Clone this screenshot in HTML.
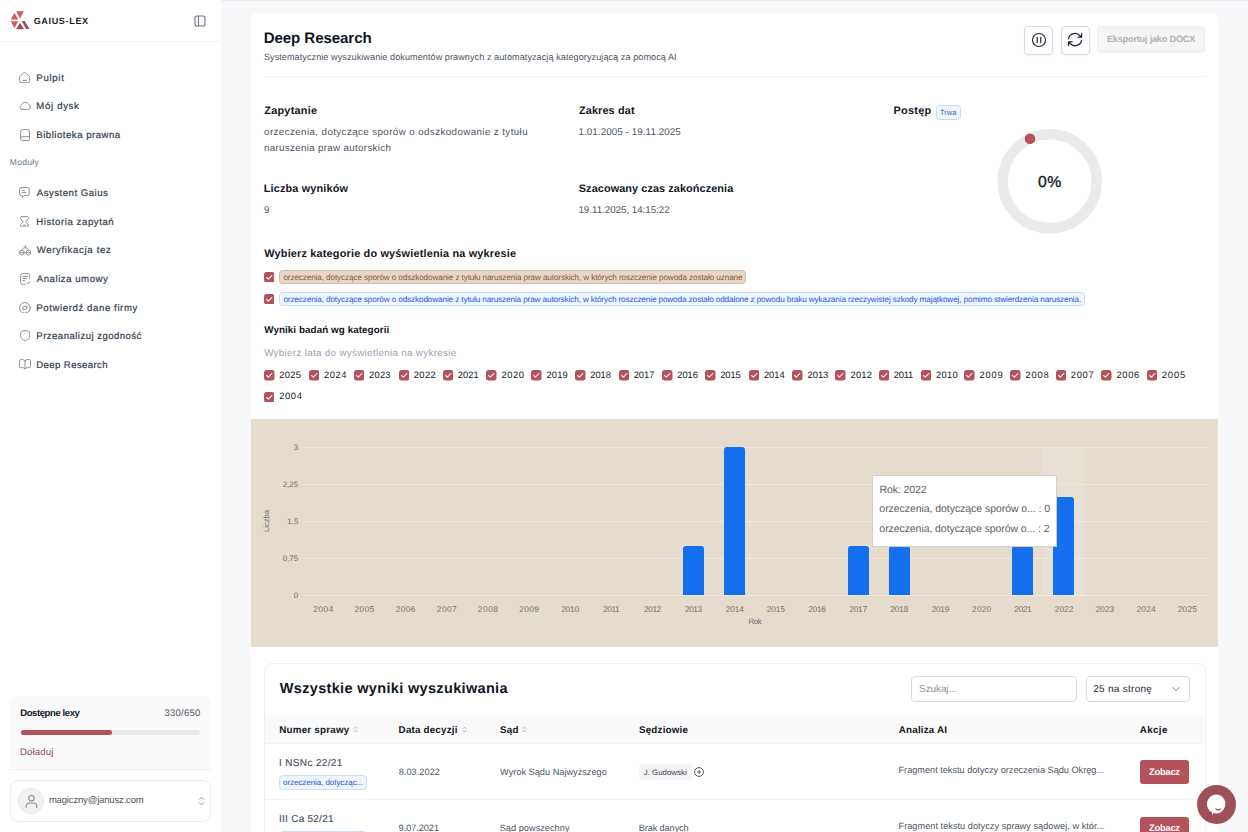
<!DOCTYPE html>
<html lang="pl"><head><meta charset="utf-8"><title>Deep Research - Gaius-Lex</title>
<style>
html,body{margin:0;padding:0;}
body{width:1248px;height:832px;overflow:hidden;position:relative;background:#f7f8fa;font-family:"Liberation Sans", sans-serif;text-rendering:geometricPrecision;}
.b{position:absolute;box-sizing:border-box;}
.t{position:absolute;white-space:nowrap;margin:0;padding:0;}
</style></head><body>
<div class="b" style="left:221px;top:0px;width:1027px;height:1px;background:#e9ebee;"></div>
<div class="b" style="left:0px;top:0px;width:221px;height:832px;background:#ffffff;"></div>
<div class="b" style="left:0px;top:41px;width:221px;height:1px;background:#f1f2f4;"></div>
<div class="b" style="left:250.5px;top:12.5px;width:967px;height:830px;background:#ffffff;border-radius:7px;"></div>
<svg class="b" style="left:8px;top:8px;" width="24" height="24" viewBox="0 0 24 24" fill="none"><polygon points="8.1,3.3 16,3.3 12,10.4" fill="#cd5b65"/><polygon points="6.4,4.7 2.8,11.6 10.2,11.6" fill="#cd5b65"/><polygon points="2.8,13.3 10.2,13.3 6.4,20.2" fill="#cd5b65"/><polygon points="12,14.7 8.1,21.2 16,21.2" fill="#a04a53"/><polygon points="13.7,13.1 16.8,13.1 21.4,21 18.1,21" fill="#a04a53"/></svg>
<svg class="b" style="left:194px;top:14.5px;" width="12" height="12" viewBox="0 0 12 12" fill="none"><rect x="1" y="1" width="10" height="10" rx="2" stroke="#6b7280" stroke-width="1.1"/><path d="M4.5 1v10" stroke="#6b7280" stroke-width="1.1"/></svg>
<svg class="b" style="left:18.75px;top:71.5px;" width="11.25" height="11.4" viewBox="0 0 11.25 11.4" fill="none"><g stroke="#8b909a" stroke-width="1" stroke-linecap="round" stroke-linejoin="round"><path d="M.6 5.3a1.600 1.600 0 0 1 .6-1.250L4.600 1a1.600 1.600 0 0 1 2.050 0l3.400 3.050a1.600 1.600 0 0 1 .6 1.250V8.800a2 2 0 0 1-2 2H2.600a2 2 0 0 1-2-2z"/><path d="M4.300 8.300h2.700" stroke-width="1.300"/></g></svg>
<svg class="b" style="left:18.75px;top:101.25px;" width="12.0" height="9.0" viewBox="0 0 12.0 9.0" fill="none"><g stroke="#8b909a" stroke-width="1" stroke-linecap="round" stroke-linejoin="round"><path d="M3.200 8.400h5.700a2.550 2.550 0 0 0 .7-5A3.900 3.900 0 0 0 2.300 4.300a2.150 2.150 0 0 0 .9 4.100z"/></g></svg>
<svg class="b" style="left:20px;top:128.5px;" width="10" height="12.1" viewBox="0 0 10 12.1" fill="none"><g stroke="#8b909a" stroke-width="1" stroke-linecap="round" stroke-linejoin="round"><path d="M.6 9.600V2.400A1.800 1.800 0 0 1 2.400 .6h6a1 1 0 0 1 1 1v8.900a1 1 0 0 1-1 1H2.500a1.900 1.900 0 0 1 0-3.800h6.900"/></g></svg>
<svg class="b" style="left:19.1px;top:187.3px;" width="10.8" height="11.4" viewBox="0 0 10.8 11.4" fill="none"><g stroke="#8b909a" stroke-width="1" stroke-linecap="round" stroke-linejoin="round"><path d="M2.400 .6h6a1.800 1.800 0 0 1 1.800 1.800v4.400a1.800 1.800 0 0 1-1.800 1.800H5.300L3.200 10.700V8.600H2.400A1.800 1.800 0 0 1 .6 6.800V2.400A1.800 1.800 0 0 1 2.400 .6z"/><path d="M3 3.400h2.300M3 5.400h4"/></g></svg>
<svg class="b" style="left:20.1px;top:215.9px;" width="8.9" height="11.6" viewBox="0 0 8.9 11.6" fill="none"><g stroke="#8b909a" stroke-width="1" stroke-linecap="round" stroke-linejoin="round"><path d="M1.600 .6h5.700a1 1 0 0 1 1 1v.9c0 1.700-2.500 2.100-2.500 3.300s2.500 1.600 2.500 3.300v.9a1 1 0 0 1-1 1H1.600a1 1 0 0 1-1-1v-.9c0-1.700 2.500-2.100 2.500-3.300S.6 4.200 .6 2.500v-.9a1 1 0 0 1 1-1z"/><path d="M3.300 9.300h2.300"/></g></svg>
<svg class="b" style="left:18.6px;top:245.2px;" width="12.3" height="10.6" viewBox="0 0 12.3 10.6" fill="none"><g stroke="#8b909a" stroke-width="1" stroke-linecap="round" stroke-linejoin="round"><path d="M6.250 .5v2.300M2.800 4.900C3 3.500 4.500 2.800 6.250 2.800S9.500 3.500 9.700 4.900"/><circle cx="2.950" cy="7.600" r="2.400"/><circle cx="9.450" cy="7.600" r="2.400"/><path d="M.55 7.600h4.800M7.050 7.600h4.800"/></g></svg>
<svg class="b" style="left:19.5px;top:273px;" width="10.4" height="11.9" viewBox="0 0 10.4 11.9" fill="none"><g stroke="#8b909a" stroke-width="1" stroke-linecap="round" stroke-linejoin="round"><path d="M9.800 6.200V2.400A1.800 1.800 0 0 0 8 .6H2.400A1.800 1.800 0 0 0 .6 2.400v7.100a1.800 1.800 0 0 0 1.800 1.800H5.500"/><path d="M2.700 3.400h4.800M2.700 5.500h3.600M2.700 7.600h1.800"/><path d="M7 9.700l1.100 1.100 1.900-2.300"/></g></svg>
<svg class="b" style="left:18.8px;top:301.5px;" width="11.8" height="11.8" viewBox="0 0 11.8 11.8" fill="none"><g stroke="#8b909a" stroke-width="1" stroke-linecap="round" stroke-linejoin="round"><circle cx="5.900" cy="5.900" r="5.350"/><ellipse cx="5.900" cy="5.900" rx="2.500" ry="1.450" transform="rotate(-32 5.900 5.900)"/></g></svg>
<svg class="b" style="left:19.5px;top:330.2px;" width="10.4" height="11.2" viewBox="0 0 10.4 11.2" fill="none"><g stroke="#8b909a" stroke-width="1" stroke-linecap="round" stroke-linejoin="round"><path d="M.6 3.300A2.400 2.400 0 0 1 2.700 .9l2.500-.3 2.500.3a2.400 2.400 0 0 1 2.100 2.400v2.500c0 2.300-1.700 4-4.600 4.800C2.300 9.800 .6 8.100 .6 5.800z"/></g></svg>
<svg class="b" style="left:18.8px;top:359.1px;" width="12.1" height="10.5" viewBox="0 0 12.1 10.5" fill="none"><g stroke="#8b909a" stroke-width="1" stroke-linecap="round" stroke-linejoin="round"><path d="M6.050 2v8M6.050 2C5.600 1.100 4.700 .6 3.400 .6H1.600a1 1 0 0 0-1 1v6a1 1 0 0 0 1 1h1.800c1.300 0 2.200.5 2.650 1.400.45-.9 1.350-1.400 2.650-1.400h1.800a1 1 0 0 0 1-1v-6a1 1 0 0 0-1-1H8.700C7.400 .6 6.500 1.100 6.050 2z"/></g></svg>
<div class="b" style="left:10px;top:696px;width:201px;height:72.6px;background:#fafafa;border-radius:8px;"></div>
<div class="b" style="left:10px;top:769px;width:201px;height:1px;background:#f0f1f3;"></div>
<div class="b" style="left:20.8px;top:729.5px;width:179.5px;height:5px;background:#e9eaec;border-radius:2.5px;"></div>
<div class="b" style="left:20.8px;top:729.5px;width:91.5px;height:5px;background:#b4525c;border-radius:2.5px;"></div>
<div class="b" style="left:10px;top:780px;width:201px;height:42px;background:#ffffff;border:1px solid #ececee;border-radius:8px;"></div>
<div class="b" style="left:18px;top:788px;width:26px;height:26px;background:#f1f1f2;border:1px solid #e6e6e8;border-radius:13px;"></div>
<svg class="b" style="left:24.5px;top:793.5px;" width="13" height="15" viewBox="0 0 13 15" fill="none"><g stroke="#8b8f97" stroke-width="1.1" stroke-linecap="round"><circle cx="6.500" cy="4.200" r="2.700"/><path d="M1.200 13.500v-1.300A3.200 3.200 0 0 1 4.400 9h4.200a3.200 3.200 0 0 1 3.200 3.200v1.300"/></g></svg>
<svg class="b" style="left:197.5px;top:795.5px;" width="7" height="10" viewBox="0 0 7 10" fill="none"><g stroke="#8b8f97" stroke-width="0.9" stroke-linecap="round" stroke-linejoin="round"><path d="M1.300 3.400L3.500 1.200l2.200 2.200M1.300 6.600l2.200 2.200 2.200-2.200"/></g></svg>
<div class="b" style="left:264px;top:76px;width:941.5px;height:1px;background:#f2f3f5;"></div>
<div class="b" style="left:1024px;top:26px;width:28.8px;height:28.5px;background:#ffffff;border:1px solid #d9dadd;border-radius:4px;box-shadow:0 1px 1px rgba(0,0,0,.04);"></div>
<svg class="b" style="left:1030.75px;top:32.1px;" width="16" height="16" viewBox="0 0 16 16" fill="none"><circle cx="8" cy="8" r="6.5" stroke="#1f2937" stroke-width="1.15"/><path d="M6.2 5.4v5.200M9.800 5.400v5.200" stroke="#1f2937" stroke-width="1.25" stroke-linecap="round"/></svg>
<div class="b" style="left:1061px;top:26px;width:28.6px;height:28.5px;background:#ffffff;border:1px solid #d9dadd;border-radius:4px;box-shadow:0 1px 1px rgba(0,0,0,.04);"></div>
<svg class="b" style="left:1067px;top:32.4px;" width="16.2" height="15.2" viewBox="0 0 15 14" fill="none"><g stroke="#1f2937" stroke-width="1.2" stroke-linecap="round" stroke-linejoin="round"><path d="M1.500 6.200a6 5.500 0 0 1 10.700-2.700l1.300 1.300M13.500 1.500v3.300h-3.300M13.500 7.800a6 5.500 0 0 1-10.700 2.700l-1.300-1.300M1.500 12.500V9.200h3.300"/></g></svg>
<div class="b" style="left:1097px;top:26px;width:108.2px;height:26.4px;background:#f5f5f6;border:1px solid #ededef;border-radius:4px;box-shadow:0 1px 1px rgba(0,0,0,.04);"></div>
<div class="b" style="left:936.2px;top:105px;width:24.6px;height:14.5px;background:#eff6ff;border:1px solid #c4dbfd;border-radius:3.5px;"></div>
<svg class="b" style="left:993px;top:125px;" width="114" height="114" viewBox="0 0 114 114" fill="none"><circle cx="56.7" cy="56.3" r="47" stroke="#e9eaec" stroke-width="10.4"/><circle cx="37" cy="13.7" r="5.3" fill="#b5525c"/></svg>
<svg class="b" style="left:263.8px;top:271.7px;" width="10.5" height="10.5" viewBox="0 0 10.5 10.5" fill="none"><rect x="0" y="0" width="10.5" height="10.5" rx="2.7" fill="#b5525c"/><path d="M2.6 5.5l1.800 1.700 3.500-3.700" stroke="#ffffff" stroke-width="1.05" stroke-linecap="round" stroke-linejoin="round"/></svg>
<div class="b" style="left:279px;top:269.7px;width:466.8px;height:14.4px;background:#e6d8c6;border:1px solid #d6baa4;border-radius:3.5px;"></div>
<svg class="b" style="left:263.8px;top:293.8px;" width="10.5" height="10.5" viewBox="0 0 10.5 10.5" fill="none"><rect x="0" y="0" width="10.5" height="10.5" rx="2.7" fill="#b5525c"/><path d="M2.6 5.5l1.800 1.700 3.500-3.700" stroke="#ffffff" stroke-width="1.05" stroke-linecap="round" stroke-linejoin="round"/></svg>
<div class="b" style="left:279px;top:292.2px;width:805.7px;height:13.8px;background:#eff6ff;border:1px solid #c4dbfd;border-radius:3.5px;"></div>
<svg class="b" style="left:264.05px;top:370.4px;" width="10.5" height="10.5" viewBox="0 0 10.5 10.5" fill="none"><rect x="0" y="0" width="10.5" height="10.5" rx="2.7" fill="#b5525c"/><path d="M2.6 5.5l1.800 1.700 3.500-3.700" stroke="#ffffff" stroke-width="1.05" stroke-linecap="round" stroke-linejoin="round"/></svg>
<svg class="b" style="left:308.90000000000003px;top:370.4px;" width="10.5" height="10.5" viewBox="0 0 10.5 10.5" fill="none"><rect x="0" y="0" width="10.5" height="10.5" rx="2.7" fill="#b5525c"/><path d="M2.6 5.5l1.800 1.700 3.500-3.700" stroke="#ffffff" stroke-width="1.05" stroke-linecap="round" stroke-linejoin="round"/></svg>
<svg class="b" style="left:353.90000000000003px;top:370.4px;" width="10.5" height="10.5" viewBox="0 0 10.5 10.5" fill="none"><rect x="0" y="0" width="10.5" height="10.5" rx="2.7" fill="#b5525c"/><path d="M2.6 5.5l1.800 1.700 3.500-3.700" stroke="#ffffff" stroke-width="1.05" stroke-linecap="round" stroke-linejoin="round"/></svg>
<svg class="b" style="left:398.5px;top:370.4px;" width="10.5" height="10.5" viewBox="0 0 10.5 10.5" fill="none"><rect x="0" y="0" width="10.5" height="10.5" rx="2.7" fill="#b5525c"/><path d="M2.6 5.5l1.800 1.700 3.500-3.700" stroke="#ffffff" stroke-width="1.05" stroke-linecap="round" stroke-linejoin="round"/></svg>
<svg class="b" style="left:442.6px;top:370.4px;" width="10.5" height="10.5" viewBox="0 0 10.5 10.5" fill="none"><rect x="0" y="0" width="10.5" height="10.5" rx="2.7" fill="#b5525c"/><path d="M2.6 5.5l1.800 1.700 3.500-3.700" stroke="#ffffff" stroke-width="1.05" stroke-linecap="round" stroke-linejoin="round"/></svg>
<svg class="b" style="left:486.3px;top:370.4px;" width="10.5" height="10.5" viewBox="0 0 10.5 10.5" fill="none"><rect x="0" y="0" width="10.5" height="10.5" rx="2.7" fill="#b5525c"/><path d="M2.6 5.5l1.800 1.700 3.500-3.700" stroke="#ffffff" stroke-width="1.05" stroke-linecap="round" stroke-linejoin="round"/></svg>
<svg class="b" style="left:531.3px;top:370.4px;" width="10.5" height="10.5" viewBox="0 0 10.5 10.5" fill="none"><rect x="0" y="0" width="10.5" height="10.5" rx="2.7" fill="#b5525c"/><path d="M2.6 5.5l1.800 1.700 3.500-3.700" stroke="#ffffff" stroke-width="1.05" stroke-linecap="round" stroke-linejoin="round"/></svg>
<svg class="b" style="left:575.0999999999999px;top:370.4px;" width="10.5" height="10.5" viewBox="0 0 10.5 10.5" fill="none"><rect x="0" y="0" width="10.5" height="10.5" rx="2.7" fill="#b5525c"/><path d="M2.6 5.5l1.800 1.700 3.500-3.700" stroke="#ffffff" stroke-width="1.05" stroke-linecap="round" stroke-linejoin="round"/></svg>
<svg class="b" style="left:618.5px;top:370.4px;" width="10.5" height="10.5" viewBox="0 0 10.5 10.5" fill="none"><rect x="0" y="0" width="10.5" height="10.5" rx="2.7" fill="#b5525c"/><path d="M2.6 5.5l1.800 1.700 3.500-3.700" stroke="#ffffff" stroke-width="1.05" stroke-linecap="round" stroke-linejoin="round"/></svg>
<svg class="b" style="left:662.0999999999999px;top:370.4px;" width="10.5" height="10.5" viewBox="0 0 10.5 10.5" fill="none"><rect x="0" y="0" width="10.5" height="10.5" rx="2.7" fill="#b5525c"/><path d="M2.6 5.5l1.800 1.700 3.500-3.700" stroke="#ffffff" stroke-width="1.05" stroke-linecap="round" stroke-linejoin="round"/></svg>
<svg class="b" style="left:705.0999999999999px;top:370.4px;" width="10.5" height="10.5" viewBox="0 0 10.5 10.5" fill="none"><rect x="0" y="0" width="10.5" height="10.5" rx="2.7" fill="#b5525c"/><path d="M2.6 5.5l1.800 1.700 3.500-3.700" stroke="#ffffff" stroke-width="1.05" stroke-linecap="round" stroke-linejoin="round"/></svg>
<svg class="b" style="left:748.6999999999999px;top:370.4px;" width="10.5" height="10.5" viewBox="0 0 10.5 10.5" fill="none"><rect x="0" y="0" width="10.5" height="10.5" rx="2.7" fill="#b5525c"/><path d="M2.6 5.5l1.800 1.700 3.500-3.700" stroke="#ffffff" stroke-width="1.05" stroke-linecap="round" stroke-linejoin="round"/></svg>
<svg class="b" style="left:792.3px;top:370.4px;" width="10.5" height="10.5" viewBox="0 0 10.5 10.5" fill="none"><rect x="0" y="0" width="10.5" height="10.5" rx="2.7" fill="#b5525c"/><path d="M2.6 5.5l1.800 1.700 3.500-3.700" stroke="#ffffff" stroke-width="1.05" stroke-linecap="round" stroke-linejoin="round"/></svg>
<svg class="b" style="left:835.3px;top:370.4px;" width="10.5" height="10.5" viewBox="0 0 10.5 10.5" fill="none"><rect x="0" y="0" width="10.5" height="10.5" rx="2.7" fill="#b5525c"/><path d="M2.6 5.5l1.800 1.700 3.500-3.700" stroke="#ffffff" stroke-width="1.05" stroke-linecap="round" stroke-linejoin="round"/></svg>
<svg class="b" style="left:878.5999999999999px;top:370.4px;" width="10.5" height="10.5" viewBox="0 0 10.5 10.5" fill="none"><rect x="0" y="0" width="10.5" height="10.5" rx="2.7" fill="#b5525c"/><path d="M2.6 5.5l1.800 1.700 3.500-3.700" stroke="#ffffff" stroke-width="1.05" stroke-linecap="round" stroke-linejoin="round"/></svg>
<svg class="b" style="left:920.8px;top:370.4px;" width="10.5" height="10.5" viewBox="0 0 10.5 10.5" fill="none"><rect x="0" y="0" width="10.5" height="10.5" rx="2.7" fill="#b5525c"/><path d="M2.6 5.5l1.800 1.700 3.500-3.700" stroke="#ffffff" stroke-width="1.05" stroke-linecap="round" stroke-linejoin="round"/></svg>
<svg class="b" style="left:964.3px;top:370.4px;" width="10.5" height="10.5" viewBox="0 0 10.5 10.5" fill="none"><rect x="0" y="0" width="10.5" height="10.5" rx="2.7" fill="#b5525c"/><path d="M2.6 5.5l1.800 1.700 3.500-3.700" stroke="#ffffff" stroke-width="1.05" stroke-linecap="round" stroke-linejoin="round"/></svg>
<svg class="b" style="left:1010.3px;top:370.4px;" width="10.5" height="10.5" viewBox="0 0 10.5 10.5" fill="none"><rect x="0" y="0" width="10.5" height="10.5" rx="2.7" fill="#b5525c"/><path d="M2.6 5.5l1.800 1.700 3.500-3.700" stroke="#ffffff" stroke-width="1.05" stroke-linecap="round" stroke-linejoin="round"/></svg>
<svg class="b" style="left:1055.6px;top:370.4px;" width="10.5" height="10.5" viewBox="0 0 10.5 10.5" fill="none"><rect x="0" y="0" width="10.5" height="10.5" rx="2.7" fill="#b5525c"/><path d="M2.6 5.5l1.800 1.700 3.500-3.700" stroke="#ffffff" stroke-width="1.05" stroke-linecap="round" stroke-linejoin="round"/></svg>
<svg class="b" style="left:1101.3px;top:370.4px;" width="10.5" height="10.5" viewBox="0 0 10.5 10.5" fill="none"><rect x="0" y="0" width="10.5" height="10.5" rx="2.7" fill="#b5525c"/><path d="M2.6 5.5l1.800 1.700 3.500-3.700" stroke="#ffffff" stroke-width="1.05" stroke-linecap="round" stroke-linejoin="round"/></svg>
<svg class="b" style="left:1146.6px;top:370.4px;" width="10.5" height="10.5" viewBox="0 0 10.5 10.5" fill="none"><rect x="0" y="0" width="10.5" height="10.5" rx="2.7" fill="#b5525c"/><path d="M2.6 5.5l1.800 1.700 3.500-3.700" stroke="#ffffff" stroke-width="1.05" stroke-linecap="round" stroke-linejoin="round"/></svg>
<svg class="b" style="left:263.8px;top:391.5px;" width="10.5" height="10.5" viewBox="0 0 10.5 10.5" fill="none"><rect x="0" y="0" width="10.5" height="10.5" rx="2.7" fill="#b5525c"/><path d="M2.6 5.5l1.800 1.700 3.500-3.700" stroke="#ffffff" stroke-width="1.05" stroke-linecap="round" stroke-linejoin="round"/></svg>
<div class="b" style="left:250.5px;top:418.5px;width:967.3px;height:228.4px;background:#e5dccd;"></div>
<div class="b" style="left:1043.418181818182px;top:447.2px;width:40.34545454545455px;height:148.2px;background:#e8e0d4;"></div>
<div class="b" style="left:302.8px;top:446.7px;width:905.2px;height:1px;background:#eee8dd;"></div>
<div class="b" style="left:302.8px;top:483.8px;width:905.2px;height:1px;background:#eee8dd;"></div>
<div class="b" style="left:302.8px;top:520.8px;width:905.2px;height:1px;background:#eee8dd;"></div>
<div class="b" style="left:302.8px;top:557.8px;width:905.2px;height:1px;background:#eee8dd;"></div>
<div class="b" style="left:302.8px;top:594.9px;width:905.2px;height:1px;background:#eee8dd;"></div>
<div class="b" style="left:683.0818181818182px;top:546.0px;width:21px;height:49.4px;background:#1570ef;border-radius:3px 3px 0 0;"></div>
<div class="b" style="left:724.2272727272727px;top:447.2px;width:21px;height:148.2px;background:#1570ef;border-radius:3px 3px 0 0;"></div>
<div class="b" style="left:847.6636363636363px;top:546.0px;width:21px;height:49.4px;background:#1570ef;border-radius:3px 3px 0 0;"></div>
<div class="b" style="left:888.809090909091px;top:546.0px;width:21px;height:49.4px;background:#1570ef;border-radius:3px 3px 0 0;"></div>
<div class="b" style="left:1012.2454545454547px;top:546.0px;width:21px;height:49.4px;background:#1570ef;border-radius:3px 3px 0 0;"></div>
<div class="b" style="left:1053.3909090909092px;top:496.59999999999997px;width:21px;height:98.8px;background:#1570ef;border-radius:3px 3px 0 0;"></div>
<div class="b" style="left:872px;top:475px;width:185px;height:72px;background:#ffffff;border:1px solid #d0d0d0;"></div>
<div class="b" style="left:264px;top:662.5px;width:942.2px;height:200px;background:#ffffff;border:1px solid #eeeff1;border-radius:8px;"></div>
<div class="b" style="left:911.4px;top:676px;width:166px;height:25.6px;background:#ffffff;border:1px solid #d9dadd;border-radius:4px;"></div>
<div class="b" style="left:1085.5px;top:676px;width:104.1px;height:25.6px;background:#ffffff;border:1px solid #d9dadd;border-radius:4px;"></div>
<svg class="b" style="left:1172.4px;top:686.2px;" width="8" height="6" viewBox="0 0 8 6" fill="none"><path d="M1 1.5l3 3 3-3" stroke="#6b7280" stroke-width="0.9" stroke-linecap="round" stroke-linejoin="round"/></svg>
<div class="b" style="left:264.7px;top:714.8px;width:939.8px;height:28.7px;background:#fafafa;"></div>
<div class="b" style="left:264.7px;top:743.2px;width:939.8px;height:1px;background:#f2f3f4;"></div>
<svg class="b" style="left:353.3px;top:726.3000000000001px;" width="5" height="7" viewBox="0 0 5 7" fill="none"><path d="M1 2.6L2.5 1 4 2.600M1 4.400L2.500 6 4 4.400" stroke="#9aa0a9" stroke-width="0.700" stroke-linecap="round" stroke-linejoin="round"/></svg>
<svg class="b" style="left:462.1px;top:726.3000000000001px;" width="5" height="7" viewBox="0 0 5 7" fill="none"><path d="M1 2.6L2.5 1 4 2.600M1 4.400L2.500 6 4 4.400" stroke="#9aa0a9" stroke-width="0.700" stroke-linecap="round" stroke-linejoin="round"/></svg>
<svg class="b" style="left:521.9px;top:726.3000000000001px;" width="5" height="7" viewBox="0 0 5 7" fill="none"><path d="M1 2.6L2.5 1 4 2.600M1 4.400L2.500 6 4 4.400" stroke="#9aa0a9" stroke-width="0.700" stroke-linecap="round" stroke-linejoin="round"/></svg>
<div class="b" style="left:264.7px;top:799px;width:939.8px;height:1px;background:#f0f1f3;"></div>
<div class="b" style="left:279.4px;top:775px;width:87.3px;height:14.6px;background:#eff6ff;border:1px solid #c9defd;border-radius:4px;"></div>
<div class="b" style="left:639px;top:764.2px;width:52.5px;height:16.2px;background:#f4f4f5;border-radius:3px;"></div>
<svg class="b" style="left:694.4px;top:767.3px;" width="10" height="10" viewBox="0 0 10 10" fill="none"><circle cx="5" cy="5" r="4.4" stroke="#374151" stroke-width="0.9"/><path d="M5 3.400v3.200M3.400 5h3.200" stroke="#374151" stroke-width="0.8" stroke-linecap="round"/></svg>
<div class="b" style="left:1140.1px;top:760.4px;width:48.9px;height:23.3px;background:#b5525c;border-radius:3px;"></div>
<div class="b" style="left:279.4px;top:831px;width:87.3px;height:14.6px;background:#eff6ff;border:1px solid #c9defd;border-radius:4px;"></div>
<div class="b" style="left:1140.1px;top:816.5px;width:48.9px;height:23.3px;background:#b5525c;border-radius:3px;"></div>
<div class="b" style="left:1196.9px;top:784.9px;width:39px;height:39px;background:#9d5057;border-radius:19.5px;"></div>
<div class="t" style="left:33.64px;top:17px;font-size:9.1px;line-height:9.1px;color:#1b1f27;font-weight:700;letter-spacing:0.625px;">GAIUS-LEX</div>
<div class="t" style="left:36.3px;top:74px;font-size:9.6px;line-height:9.6px;color:#333e50;letter-spacing:0.715px;-webkit-text-stroke:0.2px;">Pulpit</div>
<div class="t" style="left:36.3px;top:102px;font-size:9.6px;line-height:9.6px;color:#333e50;letter-spacing:0.678px;-webkit-text-stroke:0.2px;">Mój dysk</div>
<div class="t" style="left:36.3px;top:131px;font-size:9.6px;line-height:9.6px;color:#333e50;letter-spacing:0.511px;-webkit-text-stroke:0.2px;">Biblioteka prawna</div>
<div class="t" style="left:36.76px;top:189px;font-size:9.6px;line-height:9.6px;color:#333e50;letter-spacing:0.503px;-webkit-text-stroke:0.2px;">Asystent Gaius</div>
<div class="t" style="left:36.3px;top:218px;font-size:9.6px;line-height:9.6px;color:#333e50;letter-spacing:0.570px;-webkit-text-stroke:0.2px;">Historia zapytań</div>
<div class="t" style="left:36.67px;top:246px;font-size:9.6px;line-height:9.6px;color:#333e50;letter-spacing:0.660px;-webkit-text-stroke:0.2px;">Weryfikacja tez</div>
<div class="t" style="left:36.76px;top:275px;font-size:9.6px;line-height:9.6px;color:#333e50;letter-spacing:0.544px;-webkit-text-stroke:0.2px;">Analiza umowy</div>
<div class="t" style="left:36.3px;top:304px;font-size:9.6px;line-height:9.6px;color:#333e50;letter-spacing:0.602px;-webkit-text-stroke:0.2px;">Potwierdź dane firmy</div>
<div class="t" style="left:36.3px;top:332px;font-size:9.6px;line-height:9.6px;color:#333e50;letter-spacing:0.455px;-webkit-text-stroke:0.2px;">Przeanalizuj zgodność</div>
<div class="t" style="left:36.3px;top:361px;font-size:9.6px;line-height:9.6px;color:#333e50;letter-spacing:0.390px;-webkit-text-stroke:0.2px;">Deep Research</div>
<div class="t" style="left:9.84px;top:158px;font-size:8.5px;line-height:8.5px;color:#6b7280;letter-spacing:0.311px;">Moduły</div>
<div class="t" style="left:20.21px;top:709px;font-size:9.5px;line-height:9.5px;color:#111827;font-weight:700;letter-spacing:-0.398px;">Dostępne lexy</div>
<div class="t" style="left:164.48px;top:709px;font-size:9.5px;line-height:9.5px;color:#4b5563;letter-spacing:0.252px;">330/650</div>
<div class="t" style="left:20.08px;top:748px;font-size:9.5px;line-height:9.5px;color:#98444d;letter-spacing:0.179px;">Doładuj</div>
<div class="t" style="left:48.88px;top:796px;font-size:9.5px;line-height:9.5px;color:#4b5563;letter-spacing:-0.165px;">magiczny@janusz.com</div>
<div class="t" style="left:263.7px;top:31px;font-size:15.1px;line-height:15.1px;color:#101623;font-weight:700;letter-spacing:-0.091px;">Deep Research</div>
<div class="t" style="left:263.91px;top:53px;font-size:9.1px;line-height:9.1px;color:#4b5563;letter-spacing:0.065px;">Systematycznie wyszukiwanie dokumentów prawnych z automatyzacją kategoryzującą za pomocą AI</div>
<div class="t" style="left:1106.95px;top:35px;font-size:9.2px;line-height:9.2px;color:#adb1b8;font-weight:700;letter-spacing:-0.222px;">Eksportuj jako DOCX</div>
<div class="t" style="left:264.25px;top:106px;font-size:10.9px;line-height:10.9px;color:#101623;font-weight:700;letter-spacing:0.251px;">Zapytanie</div>
<div class="t" style="left:264.1px;top:128px;font-size:9.8px;line-height:9.8px;color:#4b5563;letter-spacing:0.386px;">orzeczenia, dotyczące sporów o odszkodowanie z tytułu</div>
<div class="t" style="left:263.88px;top:144px;font-size:9.8px;line-height:9.8px;color:#4b5563;letter-spacing:0.314px;">naruszenia praw autorskich</div>
<div class="t" style="left:263.82px;top:184px;font-size:10.9px;line-height:10.9px;color:#101623;font-weight:700;letter-spacing:0.142px;">Liczba wyników</div>
<div class="t" style="left:264.06px;top:206px;font-size:9.8px;line-height:9.8px;color:#4b5563;">9</div>
<div class="t" style="left:578.95px;top:106px;font-size:10.9px;line-height:10.9px;color:#101623;font-weight:700;letter-spacing:0.124px;">Zakres dat</div>
<div class="t" style="left:578.44px;top:128px;font-size:9.8px;line-height:9.8px;color:#4b5563;letter-spacing:0.083px;">1.01.2005 - 19.11.2025</div>
<div class="t" style="left:578.77px;top:184px;font-size:10.9px;line-height:10.9px;color:#101623;font-weight:700;letter-spacing:0.077px;">Szacowany czas zakończenia</div>
<div class="t" style="left:578.44px;top:206px;font-size:9.8px;line-height:9.8px;color:#4b5563;letter-spacing:-0.035px;">19.11.2025, 14:15:22</div>
<div class="t" style="left:893.52px;top:106px;font-size:10.9px;line-height:10.9px;color:#101623;font-weight:700;letter-spacing:0.256px;">Postęp</div>
<div class="t" style="left:939.92px;top:109px;font-size:7.5px;line-height:7.5px;color:#3b63c4;letter-spacing:0.083px;">Trwa</div>
<div class="t" style="left:1038.1px;top:175px;font-size:15.8px;line-height:15.8px;color:#101623;letter-spacing:0.257px;-webkit-text-stroke:0.3px;">0%</div>
<div class="t" style="left:264.31px;top:249px;font-size:10.9px;line-height:10.9px;color:#101623;font-weight:700;letter-spacing:0.181px;">Wybierz kategorie do wyświetlenia na wykresie</div>
<div class="t" style="left:283.39px;top:274px;font-size:8.2px;line-height:8.2px;color:#8a5548;letter-spacing:-0.122px;">orzeczenia, dotyczące sporów o odszkodowanie z tytułu naruszenia praw autorskich, w których roszczenie powoda zostało uznane</div>
<div class="t" style="left:283.39px;top:296px;font-size:8.2px;line-height:8.2px;color:#2458e0;letter-spacing:-0.127px;">orzeczenia, dotyczące sporów o odszkodowanie z tytułu naruszenia praw autorskich, w których roszczenie powoda zostało oddalone z powodu braku wykazania rzeczywistej szkody majątkowej, pomimo stwierdzenia naruszenia.</div>
<div class="t" style="left:264.24px;top:326px;font-size:9.8px;line-height:9.8px;color:#101623;font-weight:700;letter-spacing:0.087px;">Wyniki badań wg kategorii</div>
<div class="t" style="left:264.13px;top:349px;font-size:9.8px;line-height:9.8px;color:#9aa3b2;letter-spacing:0.320px;">Wybierz lata do wyświetlenia na wykresie</div>
<div class="t" style="left:279.26px;top:370px;font-size:9.4px;line-height:9.4px;color:#141a26;letter-spacing:0.292px;">2025</div>
<div class="t" style="left:324.11px;top:370px;font-size:9.4px;line-height:9.4px;color:#141a26;letter-spacing:0.465px;">2024</div>
<div class="t" style="left:369.11px;top:370px;font-size:9.4px;line-height:9.4px;color:#141a26;letter-spacing:0.184px;">2023</div>
<div class="t" style="left:413.71px;top:370px;font-size:9.4px;line-height:9.4px;color:#141a26;letter-spacing:0.376px;">2022</div>
<div class="t" style="left:457.81px;top:370px;font-size:9.4px;line-height:9.4px;color:#141a26;letter-spacing:0.043px;">2021</div>
<div class="t" style="left:501.51px;top:370px;font-size:9.4px;line-height:9.4px;color:#141a26;letter-spacing:0.540px;">2020</div>
<div class="t" style="left:546.51px;top:370px;font-size:9.4px;line-height:9.4px;color:#141a26;letter-spacing:0.149px;">2019</div>
<div class="t" style="left:590.31px;top:370px;font-size:9.4px;line-height:9.4px;color:#141a26;letter-spacing:-0.090px;">2018</div>
<div class="t" style="left:633.71px;top:370px;font-size:9.4px;line-height:9.4px;color:#141a26;letter-spacing:-0.060px;">2017</div>
<div class="t" style="left:677.31px;top:370px;font-size:9.4px;line-height:9.4px;color:#141a26;letter-spacing:-0.075px;">2016</div>
<div class="t" style="left:720.31px;top:370px;font-size:9.4px;line-height:9.4px;color:#141a26;letter-spacing:-0.143px;">2015</div>
<div class="t" style="left:763.91px;top:370px;font-size:9.4px;line-height:9.4px;color:#141a26;letter-spacing:-0.010px;">2014</div>
<div class="t" style="left:807.51px;top:370px;font-size:9.4px;line-height:9.4px;color:#141a26;letter-spacing:-0.016px;">2013</div>
<div class="t" style="left:850.51px;top:370px;font-size:9.4px;line-height:9.4px;color:#141a26;letter-spacing:0.176px;">2012</div>
<div class="t" style="left:893.81px;top:370px;font-size:9.4px;line-height:9.4px;color:#141a26;letter-spacing:-0.221px;">2011</div>
<div class="t" style="left:936.01px;top:370px;font-size:9.4px;line-height:9.4px;color:#141a26;letter-spacing:0.273px;">2010</div>
<div class="t" style="left:979.51px;top:370px;font-size:9.4px;line-height:9.4px;color:#141a26;letter-spacing:0.759px;">2009</div>
<div class="t" style="left:1025.51px;top:370px;font-size:9.4px;line-height:9.4px;color:#141a26;letter-spacing:0.771px;">2008</div>
<div class="t" style="left:1070.81px;top:370px;font-size:9.4px;line-height:9.4px;color:#141a26;letter-spacing:0.663px;">2007</div>
<div class="t" style="left:1116.51px;top:370px;font-size:9.4px;line-height:9.4px;color:#141a26;letter-spacing:0.656px;">2006</div>
<div class="t" style="left:1161.81px;top:370px;font-size:9.4px;line-height:9.4px;color:#141a26;letter-spacing:0.859px;">2005</div>
<div class="t" style="left:279.26px;top:391px;font-size:9.4px;line-height:9.4px;color:#141a26;letter-spacing:0.584px;">2004</div>
<div class="t" style="left:293.72px;top:444px;font-size:7.9px;line-height:7.9px;color:#6c6c6c;">3</div>
<div class="t" style="left:282.69px;top:481px;font-size:7.9px;line-height:7.9px;color:#6c6c6c;">2,25</div>
<div class="t" style="left:287.3px;top:518px;font-size:7.9px;line-height:7.9px;color:#6c6c6c;">1,5</div>
<div class="t" style="left:282.69px;top:555px;font-size:7.9px;line-height:7.9px;color:#6c6c6c;">0,75</div>
<div class="t" style="left:293.67px;top:592px;font-size:7.9px;line-height:7.9px;color:#6c6c6c;">0</div>
<div class="t" style="left:313.32px;top:605px;font-size:8.3px;line-height:8.3px;color:#6c6c6c;letter-spacing:0.514px;">2004</div>
<div class="t" style="left:354.49px;top:605px;font-size:8.3px;line-height:8.3px;color:#6c6c6c;letter-spacing:0.471px;">2005</div>
<div class="t" style="left:395.73px;top:605px;font-size:8.3px;line-height:8.3px;color:#6c6c6c;letter-spacing:0.406px;">2006</div>
<div class="t" style="left:436.83px;top:605px;font-size:8.3px;line-height:8.3px;color:#6c6c6c;letter-spacing:0.454px;">2007</div>
<div class="t" style="left:477.85px;top:605px;font-size:8.3px;line-height:8.3px;color:#6c6c6c;letter-spacing:0.538px;">2008</div>
<div class="t" style="left:519.19px;top:605px;font-size:8.3px;line-height:8.3px;color:#6c6c6c;letter-spacing:0.421px;">2009</div>
<div class="t" style="left:561.14px;top:605px;font-size:8.3px;line-height:8.3px;color:#6c6c6c;letter-spacing:-0.149px;">2010</div>
<div class="t" style="left:603.06px;top:605px;font-size:8.3px;line-height:8.3px;color:#6c6c6c;letter-spacing:-0.432px;">2011</div>
<div class="t" style="left:643.97px;top:605px;font-size:8.3px;line-height:8.3px;color:#6c6c6c;letter-spacing:-0.410px;">2012</div>
<div class="t" style="left:685.07px;top:605px;font-size:8.3px;line-height:8.3px;color:#6c6c6c;letter-spacing:-0.463px;">2013</div>
<div class="t" style="left:725.77px;top:605px;font-size:8.3px;line-height:8.3px;color:#6c6c6c;letter-spacing:-0.086px;">2014</div>
<div class="t" style="left:766.85px;top:605px;font-size:8.3px;line-height:8.3px;color:#6c6c6c;letter-spacing:-0.129px;">2015</div>
<div class="t" style="left:808.18px;top:605px;font-size:8.3px;line-height:8.3px;color:#6c6c6c;letter-spacing:-0.259px;">2016</div>
<div class="t" style="left:849.28px;top:605px;font-size:8.3px;line-height:8.3px;color:#6c6c6c;letter-spacing:-0.211px;">2017</div>
<div class="t" style="left:890.3px;top:605px;font-size:8.3px;line-height:8.3px;color:#6c6c6c;letter-spacing:-0.113px;">2018</div>
<div class="t" style="left:931.64px;top:605px;font-size:8.3px;line-height:8.3px;color:#6c6c6c;letter-spacing:-0.251px;">2019</div>
<div class="t" style="left:972.1px;top:605px;font-size:8.3px;line-height:8.3px;color:#6c6c6c;letter-spacing:0.213px;">2020</div>
<div class="t" style="left:1014.32px;top:605px;font-size:8.3px;line-height:8.3px;color:#6c6c6c;letter-spacing:-0.365px;">2021</div>
<div class="t" style="left:1054.87px;top:605px;font-size:8.3px;line-height:8.3px;color:#6c6c6c;letter-spacing:-0.010px;">2022</div>
<div class="t" style="left:1095.8px;top:605px;font-size:8.3px;line-height:8.3px;color:#6c6c6c;letter-spacing:-0.063px;">2023</div>
<div class="t" style="left:1136.46px;top:605px;font-size:8.3px;line-height:8.3px;color:#6c6c6c;letter-spacing:0.263px;">2024</div>
<div class="t" style="left:1177.81px;top:605px;font-size:8.3px;line-height:8.3px;color:#6c6c6c;letter-spacing:0.211px;">2025</div>
<div class="t" style="left:748.55px;top:618px;font-size:7.8px;line-height:7.8px;color:#6c6c6c;letter-spacing:-0.326px;">Rok</div>
<div class="t" style="left:267.4px;top:521px;font-size:7.8px;line-height:7.8px;color:#6c6c6c;letter-spacing:-0.090px;transform:translate(-50%,-50%) rotate(-90deg);">Liczba</div>
<div class="t" style="left:879.43px;top:485px;font-size:10.5px;line-height:10.5px;color:#5b5f69;letter-spacing:-0.073px;">Rok: 2022</div>
<div class="t" style="left:879.36px;top:504px;font-size:10.5px;line-height:10.5px;color:#5b5f69;letter-spacing:-0.056px;">orzeczenia, dotyczące sporów o... : 0</div>
<div class="t" style="left:879.36px;top:524px;font-size:10.5px;line-height:10.5px;color:#5b5f69;letter-spacing:-0.073px;">orzeczenia, dotyczące sporów o... : 2</div>
<div class="t" style="left:279.75px;top:682px;font-size:14.5px;line-height:14.5px;color:#101623;font-weight:700;letter-spacing:0.335px;">Wszystkie wyniki wyszukiwania</div>
<div class="t" style="left:919.1px;top:685px;font-size:10px;line-height:10px;color:#8d929b;letter-spacing:-0.106px;">Szukaj...</div>
<div class="t" style="left:1093.28px;top:685px;font-size:10px;line-height:10px;color:#1f2937;letter-spacing:0.275px;">25 na stronę</div>
<div class="t" style="left:279.21px;top:726px;font-size:9.8px;line-height:9.8px;color:#101623;font-weight:700;letter-spacing:0.231px;">Numer sprawy</div>
<div class="t" style="left:398.61px;top:726px;font-size:9.8px;line-height:9.8px;color:#101623;font-weight:700;letter-spacing:0.194px;">Data decyzji</div>
<div class="t" style="left:499.92px;top:726px;font-size:9.8px;line-height:9.8px;color:#101623;font-weight:700;letter-spacing:0.243px;">Sąd</div>
<div class="t" style="left:638.92px;top:726px;font-size:9.8px;line-height:9.8px;color:#101623;font-weight:700;letter-spacing:0.218px;">Sędziowie</div>
<div class="t" style="left:898.84px;top:726px;font-size:9.8px;line-height:9.8px;color:#101623;font-weight:700;letter-spacing:0.183px;">Analiza AI</div>
<div class="t" style="left:1139.74px;top:726px;font-size:9.8px;line-height:9.8px;color:#101623;font-weight:700;letter-spacing:0.363px;">Akcje</div>
<div class="t" style="left:279.06px;top:759px;font-size:10px;line-height:10px;color:#4a5160;letter-spacing:0.342px;-webkit-text-stroke:0.15px;">I NSNc 22/21</div>
<div class="t" style="left:283.07px;top:779px;font-size:8px;line-height:8px;color:#2458e0;letter-spacing:-0.060px;">orzeczenia, dotycząc...</div>
<div class="t" style="left:398.67px;top:768px;font-size:9.2px;line-height:9.2px;color:#4b5563;letter-spacing:0.052px;">8.03.2022</div>
<div class="t" style="left:500.12px;top:768px;font-size:9.2px;line-height:9.2px;color:#4b5563;letter-spacing:0.002px;">Wyrok Sądu Najwyższego</div>
<div class="t" style="left:643.7px;top:769px;font-size:7.8px;line-height:7.8px;color:#374151;letter-spacing:0.046px;">J. Gudowski</div>
<div class="t" style="left:898.5px;top:766px;font-size:9.2px;line-height:9.2px;color:#4b5563;letter-spacing:-0.017px;">Fragment tekstu dotyczy orzeczenia Sądu Okręg...</div>
<div class="t" style="left:1149px;top:767px;font-size:9.4px;line-height:9.4px;color:#ffffff;font-weight:700;letter-spacing:-0.248px;">Zobacz</div>
<div class="t" style="left:279.06px;top:815px;font-size:10px;line-height:10px;color:#4a5160;letter-spacing:0.252px;-webkit-text-stroke:0.15px;">III Ca 52/21</div>
<div class="t" style="left:398.61px;top:824px;font-size:9.2px;line-height:9.2px;color:#4b5563;letter-spacing:-0.059px;">9.07.2021</div>
<div class="t" style="left:499.71px;top:824px;font-size:9.2px;line-height:9.2px;color:#4b5563;letter-spacing:0.025px;">Sąd powszechny</div>
<div class="t" style="left:638.7px;top:824px;font-size:9.2px;line-height:9.2px;color:#4b5563;letter-spacing:-0.104px;">Brak danych</div>
<div class="t" style="left:898.5px;top:822px;font-size:9.2px;line-height:9.2px;color:#4b5563;letter-spacing:0.021px;">Fragment tekstu dotyczy sprawy sądowej, w któr...</div>
<div class="t" style="left:1149px;top:823px;font-size:9.4px;line-height:9.4px;color:#ffffff;font-weight:700;letter-spacing:-0.248px;">Zobacz</div>
<svg class="b" style="left:1204.2px;top:791.6px;" width="24" height="26" viewBox="0 0 24 26" fill="none"><path d="M12 2.6a9.400 9.400 0 1 1-2.700 18.400L8.600 23.400l-.7-3.100A9.400 9.400 0 0 1 12 2.600z" fill="#ffffff"/><path d="M10.900 16.300c2 1.100 4.600 1.100 6.600 0-.6 1.500-1.800 2.300-3.300 2.300s-2.700-.8-3.300-2.300z" fill="#9d5057"/></svg>
</body></html>
